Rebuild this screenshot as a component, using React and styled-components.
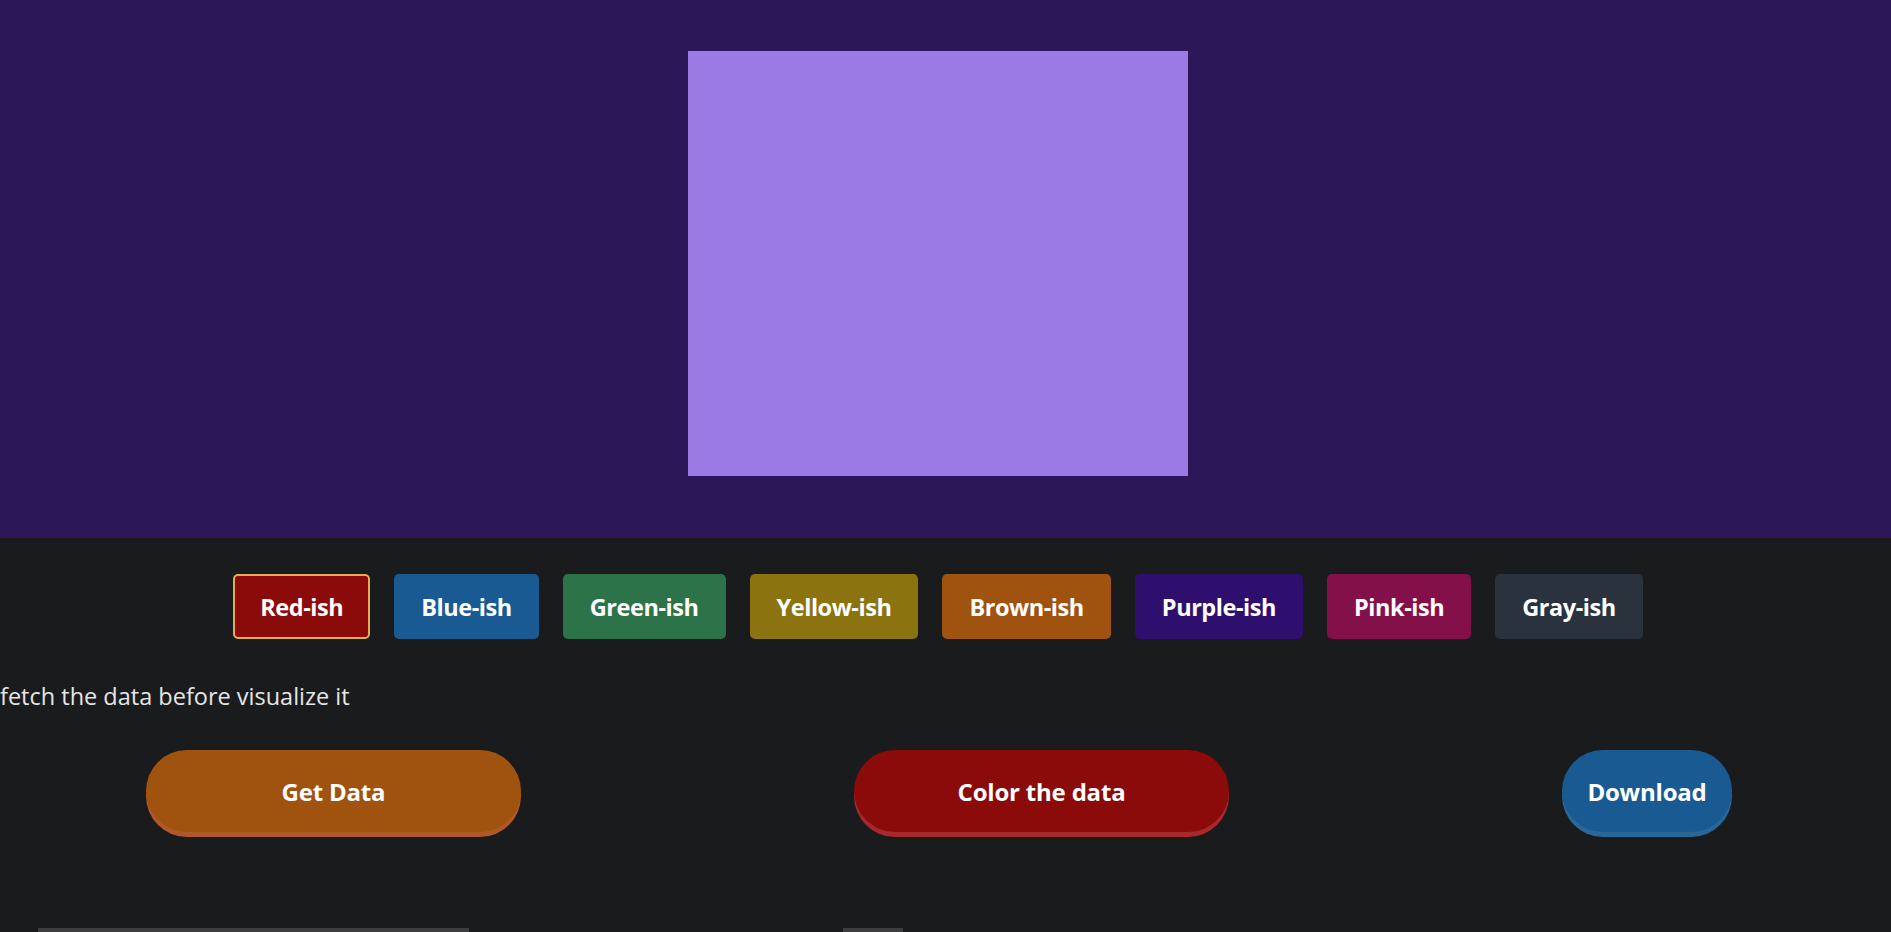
import styled, { createGlobalStyle } from "styled-components";

const GlobalStyle = createGlobalStyle`
  html, body {
    margin: 0;
    padding: 0;
    background: #1a1b1d;
    font-family: "Open Sans", "Noto Sans", sans-serif;
    color: #e8e8e8;
    overflow: hidden;
  }
`;

const palettes = [
  { name: "Red-ish", color: "#8b0a0a" },
  { name: "Blue-ish", color: "#1a5a93" },
  { name: "Green-ish", color: "#2c734a" },
  { name: "Yellow-ish", color: "#8b7310" },
  { name: "Brown-ish", color: "#a0520f" },
  { name: "Purple-ish", color: "#2e0f6e" },
  { name: "Pink-ish", color: "#84104a" },
  { name: "Gray-ish", color: "#2a323d" },
];

const App = () => {
  const active = "Red-ish";

  return (
    <Page>
      <GlobalStyle />
      <Stage>
        <Canvas />
      </Stage>
      <PaletteRow>
        {palettes.map((p) => (
          <PaletteButton
            key={p.name}
            $bg={p.color}
            className={active === p.name ? "active" : ""}
          >
            {p.name}
          </PaletteButton>
        ))}
      </PaletteRow>
      <Hint>fetch the data before visualize it</Hint>
      <Actions>
        <ActionButton $bg="#a0520f" $shade="#b0582a" $w="375px">
          Get Data
        </ActionButton>
        <ActionButton $bg="#8b0a0a" $shade="#a8292b" $w="375px">
          Color the data
        </ActionButton>
        <ActionButton $bg="#1a5a93" $shade="#2a6799" $w="170px">
          Download
        </ActionButton>
      </Actions>
      <Scrollers>
        <Track $w="431px" $ml="38px" />
        <Track $w="60px" $ml="374px" />
      </Scrollers>
    </Page>
  );
};

const Page = styled.div`
  width: 100%;
  min-height: 932px;
  background: #1a1b1d;
`;

const Stage = styled.div`
  background: #2c1758;
  height: 538px;
  display: flex;
  justify-content: center;
  align-items: flex-start;
  padding: 51px 15px 0 0;
  box-sizing: border-box;
`;

const Canvas = styled.div`
  width: 500px;
  height: 425px;
  background: #9b7be3;
`;

const PaletteRow = styled.div`
  display: flex;
  justify-content: center;
  gap: 24px;
  margin-top: 36px;
  padding-right: 15px;
`;

const PaletteButton = styled.button`
  height: 65px;
  padding: 0 25px;
  border: 2px solid transparent;
  border-radius: 5px;
  background: ${(p) => p.$bg};
  color: #ffffff;
  font-family: inherit;
  font-size: 23.5px;
  font-weight: 700;
  letter-spacing: -0.45px;
  cursor: pointer;

  &.active {
    border-color: #e0b050;
  }
`;

const Hint = styled.p`
  margin: 41px 0 0;
  font-size: 23.5px;
  line-height: 32px;
  color: #e6e6e6;
`;

const Actions = styled.div`
  display: flex;
  justify-content: space-between;
  align-items: center;
  margin-top: 38px;
  padding: 0 159px 0 146px;
`;

const ActionButton = styled.button`
  width: ${(p) => p.$w};
  height: 82px;
  border: none;
  border-radius: 41px;
  background: ${(p) => p.$bg};
  box-shadow: 0 5px 0 ${(p) => p.$shade};
  color: #ffffff;
  font-family: inherit;
  font-size: 24px;
  font-weight: 700;
  letter-spacing: -0.2px;
  cursor: pointer;
`;

const Scrollers = styled.div`
  display: flex;
  margin-top: 96px;
`;

const Track = styled.div`
  width: ${(p) => p.$w};
  margin-left: ${(p) => p.$ml};
  height: 4px;
  background: #3d3d3f;
`;

export default App;
